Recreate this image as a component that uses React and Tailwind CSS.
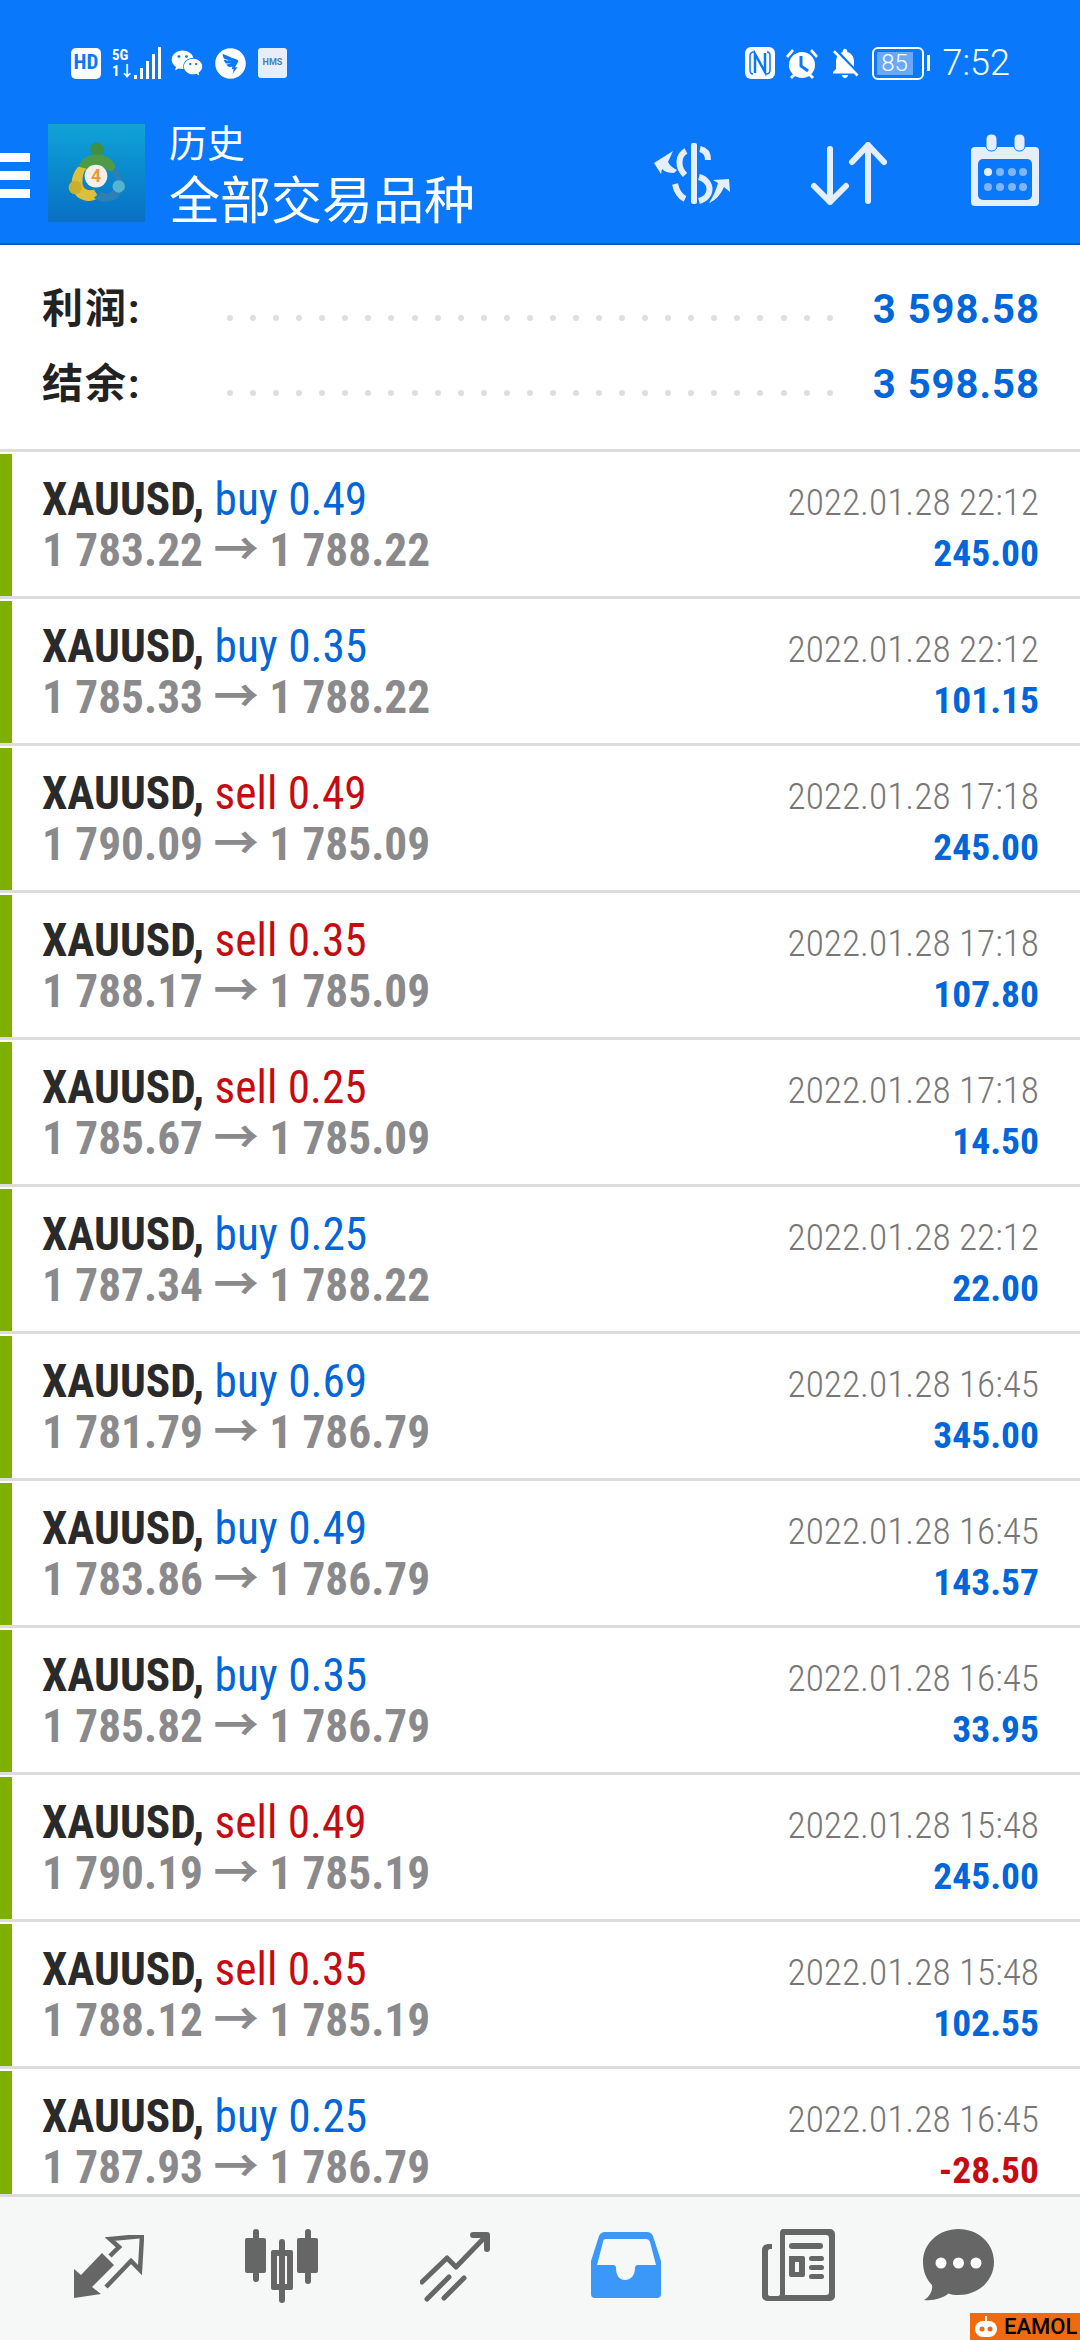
import React from 'react';
import { FaWeixin } from 'react-icons/fa';
import { AiFillDingtalkCircle } from 'react-icons/ai';
import { MdNotificationsOff } from 'react-icons/md';

const TRADES = [
  { side: 'buy', lots: '0.49', open: '1 783.22', close: '1 788.22', time: '2022.01.28 22:12', profit: '245.00' },
  { side: 'buy', lots: '0.35', open: '1 785.33', close: '1 788.22', time: '2022.01.28 22:12', profit: '101.15' },
  { side: 'sell', lots: '0.49', open: '1 790.09', close: '1 785.09', time: '2022.01.28 17:18', profit: '245.00' },
  { side: 'sell', lots: '0.35', open: '1 788.17', close: '1 785.09', time: '2022.01.28 17:18', profit: '107.80' },
  { side: 'sell', lots: '0.25', open: '1 785.67', close: '1 785.09', time: '2022.01.28 17:18', profit: '14.50' },
  { side: 'buy', lots: '0.25', open: '1 787.34', close: '1 788.22', time: '2022.01.28 22:12', profit: '22.00' },
  { side: 'buy', lots: '0.69', open: '1 781.79', close: '1 786.79', time: '2022.01.28 16:45', profit: '345.00' },
  { side: 'buy', lots: '0.49', open: '1 783.86', close: '1 786.79', time: '2022.01.28 16:45', profit: '143.57' },
  { side: 'buy', lots: '0.35', open: '1 785.82', close: '1 786.79', time: '2022.01.28 16:45', profit: '33.95' },
  { side: 'sell', lots: '0.49', open: '1 790.19', close: '1 785.19', time: '2022.01.28 15:48', profit: '245.00' },
  { side: 'sell', lots: '0.35', open: '1 788.12', close: '1 785.19', time: '2022.01.28 15:48', profit: '102.55' },
  { side: 'buy', lots: '0.25', open: '1 787.93', close: '1 786.79', time: '2022.01.28 16:45', profit: '-28.50' },
];

const DOTS = Array.from({ length: 27 });

function Signal() {
  return (
    <div className="flex items-end justify-between w-[49px] h-[32px] ml-[1px]">
      <div className="flex flex-col text-white font-bold font-stretch-condensed text-[15px] leading-[16px] w-[17px]">
        <span>5G</span>
        <span>1↓</span>
      </div>
      <div className="flex items-end gap-[3px]">
        <div className="w-[3px] h-[4px] bg-white" />
        <div className="w-[3px] h-[11px] bg-white" />
        <div className="w-[3px] h-[18px] bg-white" />
        <div className="w-[3px] h-[25px] bg-white" />
        <div className="w-[3px] h-[32px] bg-white" />
      </div>
    </div>
  );
}

function NfcIcon() {
  return (
    <svg width="30" height="32" viewBox="0 0 30 32">
      <rect width="30" height="32" rx="6" fill="#fff" />
      <path d="M9 5c-3 0-4 2-4 4v14c0 2 1 4 3 4" fill="none" stroke="#0a78fa" strokeWidth="1.500" />
      <path d="M21 27c3 0 4-2 4-4V9c0-2-1-4-3-4" fill="none" stroke="#0a78fa" strokeWidth="1.500" />
      <path d="M10 26V7l10 18V6" fill="none" stroke="#0a78fa" strokeWidth="2.500" />
    </svg>
  );
}

function AlarmIcon() {
  return (
    <svg width="34" height="33" viewBox="0 0 34 33" fill="#fff">
      <circle cx="17" cy="18" r="13" />
      <path d="M1 9l6-7 2 2-6 7zM33 9l-6-7-2 2 6 7z" />
      <path d="M5 30l4-4 2 2-4 4zM29 30l-4-4-2 2 4 4z" />
      <path d="M16 9v10l7 5" fill="none" stroke="#0a78fa" strokeWidth="3" />
    </svg>
  );
}

function Logo() {
  return (
    <div className="w-[97px] h-[98px] bg-gradient-to-b from-[#12a3d6] to-[#0a6fc4] flex items-center justify-center shrink-0">
      <svg width="62" height="62" viewBox="0 0 60 60">
        <circle cx="30" cy="7" r="6.500" fill="#3f8f45" />
        <path d="M11 30C12 16 22 12 30 12s18 4 19 18l-10-3c-6-3-12-3-18 0z" fill="#4e9b47" />
        <path d="M12 24C4 32 3 46 12 54c6 4 14 4 20 0l-5-8c-5 2-10 0-11-5 0-6 0-12 4-15z" fill="#dcc03c" />
        <circle cx="9" cy="44" r="6.500" fill="#c8b02a" />
        <path d="M48 24c8 9 9 22 2 30-7 5-17 5-23 0l7-6c5 3 9 2 12-2 3-5 2-12-2-17z" fill="#2b80b6" />
        <circle cx="51" cy="43" r="6" fill="#55b4cf" />
        <circle cx="29" cy="33" r="11" fill="#f3efe6" />
        <text x="29" y="39" textAnchor="middle" fontFamily="Roboto, sans-serif" fontSize="17" fontWeight="700" fill="#e79a3c">4</text>
      </svg>
    </div>
  );
}

function ExchangeIcon() {
  return (
    <svg width="80" height="62" viewBox="0 0 80 62">
      <rect x="38" y="0" width="6" height="61" rx="2" fill="#e6eefb" />
      <g fill="none" stroke="#e6eefb" strokeWidth="6">
        <path d="M33 8C25 12 24 24 32 32" />
        <path d="M47 6c5 1 8 5 8 11" />
        <path d="M46 34c14 4 14 20 0 24" />
        <path d="M22 41c2 9 6 13 10 15" />
      </g>
      <g fill="#e6eefb">
        <path d="M1 20L20 8l-5 11c2 4 5 6 9 8l-3 3c-5 0-9-1-12-4l-1 5z" />
        <path d="M76 36l1 13-6-5c-3 7-8 13-15 16 4-6 7-13 9-20l-5-3z" />
      </g>
    </svg>
  );
}

function SortIcon() {
  return (
    <svg width="76" height="64" viewBox="0 0 76 64" fill="none" stroke="#e6eefb" strokeWidth="6" strokeLinecap="round" strokeLinejoin="round">
      <path d="M19 7v53M3 44l16 16 16-16" />
      <path d="M57 59V3M41 20L57 3l16 17" />
    </svg>
  );
}

function CalendarIcon() {
  return (
    <svg width="70" height="72" viewBox="0 0 68 72">
      <path d="M4 13h60a4 4 0 0 1 4 4v51a4 4 0 0 1-4 4H4a4 4 0 0 1-4-4V17a4 4 0 0 1 4-4z" fill="#e6eefb" />
      <rect x="7" y="25" width="54" height="41" rx="5" fill="#0a78fa" />
      <rect x="15" y="0" width="11" height="17" rx="5" fill="#e6eefb" stroke="#0a78fa" strokeWidth="1" />
      <rect x="43" y="0" width="11" height="17" rx="5" fill="#e6eefb" stroke="#0a78fa" strokeWidth="1" />
      <circle cx="17" cy="38" r="4" fill="#e6eefb" />
      {[29, 41, 52].map(x => <circle key={x} cx={x} cy="38" r="4" fill="#7fb5fb" />)}
      {[17, 29, 41, 52].map(x => <circle key={x} cx={x} cy="53" r="4" fill="#7fb5fb" />)}
    </svg>
  );
}

function TradeIcon() {
  return (
    <svg className="mt-[6px]" width="70" height="64" viewBox="0 0 70 64">
      <path d="M0 63V34l7 6 21-22 12 12-22 22 9 7z" fill="#666" />
      <path d="M36 21l9-9-9-8 32-3-2 34-9-9-25 26" fill="none" stroke="#666" strokeWidth="4.500" />
    </svg>
  );
}

function CandleIcon() {
  return (
    <svg width="74" height="74" viewBox="0 0 74 74" fill="#666">
      <rect x="8" y="0" width="6" height="53" rx="3" />
      <rect x="0" y="9" width="21" height="35" rx="2" />
      <rect x="34" y="10" width="6" height="64" rx="3" />
      <path d="M28 21h18a2 2 0 0 1 2 2v36a2 2 0 0 1-2 2H28a2 2 0 0 1-2-2V23a2 2 0 0 1 2-2zm4 6v28h10V27z" fillRule="evenodd" />
      <rect x="60" y="0" width="6" height="55" rx="3" />
      <rect x="52" y="9" width="21" height="35" rx="2" />
    </svg>
  );
}

function TrendIcon() {
  return (
    <svg className="mt-[3px]" width="70" height="70" viewBox="0 0 70 70" fill="none" stroke="#666" strokeWidth="5" strokeLinecap="round" strokeLinejoin="round">
      <path d="M2 50l25-24 9 9 30-31" />
      <path d="M53 3h14v14" strokeWidth="6" />
      <path d="M7 67l22-22M24 66l20-20" />
    </svg>
  );
}

function InboxIcon() {
  return (
    <svg className="mt-[3px]" width="70" height="66" viewBox="0 0 70 66">
      <path d="M14 0h42c3 0 5 2 6 4l8 25v33a4 4 0 0 1-4 4H4a4 4 0 0 1-4-4V29L8 4c1-2 3-4 6-4z" fill="#3b98f8" />
      <path d="M15 7h40c2 0 3 1 4 3l6 23H47c-2 0-3 1-3 3 0 7-4 12-10 12s-9-5-9-12c0-2-1-3-3-3H6l6-23c0-2 1-3 3-3z" fill="#f6f7f7" />
    </svg>
  );
}

function NewsIcon() {
  return (
    <svg width="73" height="72" viewBox="0 0 73 72" fill="#666">
      <path d="M21 0h47a5 5 0 0 1 5 5v62a5 5 0 0 1-5 5H5a5 5 0 0 1-5-5V21c0-4 3-6 7-6h3v5H8c-1 0-2 1-2 2v43c0 1 1 2 2 2h8c1 0 2-1 2-2V4c0-2 1-4 3-4zm2 6v60h41c2 0 3-1 3-3V9c0-2-1-3-3-3z" fillRule="evenodd" />
      <rect x="27" y="14" width="34" height="6" rx="3" />
      <path d="M27 27h14a2 2 0 0 1 2 2v17a2 2 0 0 1-2 2H29a2 2 0 0 1-2-2zm6 6v10h4V33z" fillRule="evenodd" />
      <rect x="47" y="27" width="15" height="5" rx="2.500" />
      <rect x="47" y="36" width="15" height="5" rx="2.500" />
      <rect x="47" y="45" width="15" height="5" rx="2.500" />
    </svg>
  );
}

function ChatIcon() {
  return (
    <svg className="-ml-[13px]" width="71" height="72" viewBox="0 0 71 72" fill="#666">
      <path d="M35.5 0C55 0 71 14 71 33S55 66 35.5 66c-4 0-7-.5-10-1.500C20 69 11 72 1 71c5-3 9-9 8-15C3 50 0 42 0 33 0 14 16 0 35.500 0z" />
      <circle cx="18" cy="34" r="5.500" fill="#fff" />
      <circle cx="35.500" cy="34" r="5.500" fill="#fff" />
      <circle cx="53" cy="34" r="5.500" fill="#fff" />
    </svg>
  );
}

function SummaryLine({ label, value }) {
  return (
    <div className="flex items-center h-[75px]">
      <span className="w-[185px] text-[41px] font-bold tracking-[2px] text-[#222]">{label}</span>
      <div className="flex justify-between w-[606px] mt-[16px]">
        {DOTS.map((_, i) => <span key={i} className="w-[6px] h-[6px] rounded-full bg-[#dedede]" />)}
      </div>
      <span className="ml-auto text-[40px] font-bold text-[#0066d9] tracking-[1px]">{value}</span>
    </div>
  );
}

function TradeRow({ t }) {
  return (
    <div className="h-[147px] flex border-b-[3px] border-[#dcdcdc]">
      <div className="w-[12px] mt-[2px] bg-[#7fb000] shrink-0" />
      <div className="flex-1 flex justify-between pl-[30px] pr-[41px] pt-[22px] font-stretch-condensed">
        <div>
          <div className="h-[51px] leading-[51px] text-[45.300px] whitespace-nowrap">
            <span className="font-bold text-[#2a2a2a]">XAUUSD, </span>
            <span className={t.side === 'buy' ? 'text-[#0066d9]' : 'text-[#c40d12]'}>{t.side} {t.lots}</span>
          </div>
          <div className="h-[51px] leading-[51px] text-[45.300px] font-bold text-[#8a8a8c] whitespace-nowrap">
            {t.open} → {t.close}
          </div>
        </div>
        <div className="text-right pt-[3px]">
          <div className="h-[51px] leading-[51px] text-[37.300px] font-light text-[#777]">{t.time}</div>
          <div className={`h-[50px] leading-[50px] text-[37.500px] font-bold ${t.profit.startsWith('-') ? 'text-[#c40d12]' : 'text-[#0066d9]'}`}>{t.profit}</div>
        </div>
      </div>
    </div>
  );
}

export default function App() {
  return (
    <div className="relative w-[1080px] h-[2340px] flex flex-col bg-white overflow-hidden font-['Roboto','Noto_Sans_CJK_SC',sans-serif]">
      <header className="h-[245px] shrink-0 bg-[#0a78fa] border-b-[2px] border-[#0758c8] text-white">
        <div className="h-[124px] flex items-center justify-between pl-[71px] pr-[70px] pt-[2px]">
          <div className="flex items-center gap-[10px]">
            <div className="w-[30px] h-[31px] rounded-[5px] bg-white text-[#0a78fa] text-[21px] font-bold font-stretch-condensed flex items-center justify-center">HD</div>
            <Signal />
            <FaWeixin className="w-[32px] h-[32px]" />
            <AiFillDingtalkCircle className="w-[35px] h-[35px]" />
            <div className="w-[29px] h-[30px] rounded-[3px] bg-[#e6eefb] text-[#4a7fb8] text-[9px] font-bold flex items-center justify-center">HMS</div>
          </div>
          <div className="flex items-center">
            <NfcIcon />
            <div className="ml-[10px]"><AlarmIcon /></div>
            <MdNotificationsOff className="w-[36px] h-[36px] ml-[8px]" />
            <div className="ml-[9px] w-[52px] h-[33px] border-[2px] border-white rounded-[6px] p-[3px] flex">
              <div className="w-[36px] bg-[#6aa9fa] text-[24px] leading-[23px] text-center font-light">85</div>
            </div>
            <div className="w-[3px] h-[16px] bg-white ml-[3px] mr-[13px]" />
            <span className="text-[36px] font-light leading-none">7:52</span>
          </div>
        </div>
        <div className="h-[119px] flex items-start">
          <div className="flex flex-col gap-[9px] w-[30px] mt-[29px] shrink-0">
            <div className="h-[9px] bg-white" />
            <div className="h-[9px] bg-white" />
            <div className="h-[9px] bg-white" />
          </div>
          <div className="ml-[18px]"><Logo /></div>
          <div className="ml-[24px]">
            <div className="text-[38px] leading-[44px] -mt-[2px]">历史</div>
            <div className="text-[51px] leading-[60px] mt-[6px]">全部交易品种</div>
          </div>
          <div className="ml-auto flex items-start pr-[40px] pt-[19px]">
            <ExchangeIcon />
            <div className="ml-[78px] -mt-[1px]"><SortIcon /></div>
            <div className="ml-[83px] -mt-[9px]"><CalendarIcon /></div>
          </div>
        </div>
      </header>

      <section className="h-[207px] shrink-0 border-b-[3px] border-[#dcdcdc] pt-[27px] pl-[42px] pr-[40px]">
        <SummaryLine label="利润:" value="3 598.58" />
        <SummaryLine label="结余:" value="3 598.58" />
      </section>

      <main className="flex-1 overflow-hidden">
        {TRADES.map((t, i) => <TradeRow key={i} t={t} />)}
      </main>

      <nav className="h-[146px] shrink-0 bg-[#f6f7f7] border-t-[3px] border-[#dcdcdc] flex items-start gap-[101px] pl-[74px] pt-[32px]">
        <TradeIcon />
        <CandleIcon />
        <TrendIcon />
        <InboxIcon />
        <NewsIcon />
        <ChatIcon />
      </nav>

      <div className="absolute right-0 bottom-0 w-[110px] h-[27px] bg-[#f26a10] flex items-center pl-[4px] gap-[6px] text-black text-[22px] leading-none font-medium">
        <svg width="24" height="22" viewBox="0 0 24 22">
          <rect x="1" y="5" width="22" height="16" rx="8" fill="#fff" />
          <rect x="11" y="0" width="2" height="5" fill="#fff" />
          <circle cx="8" cy="13" r="2.500" fill="#f26a10" />
          <circle cx="16" cy="13" r="2.500" fill="#f26a10" />
        </svg>
        <span>EAMOL</span>
      </div>
    </div>
  );
}
